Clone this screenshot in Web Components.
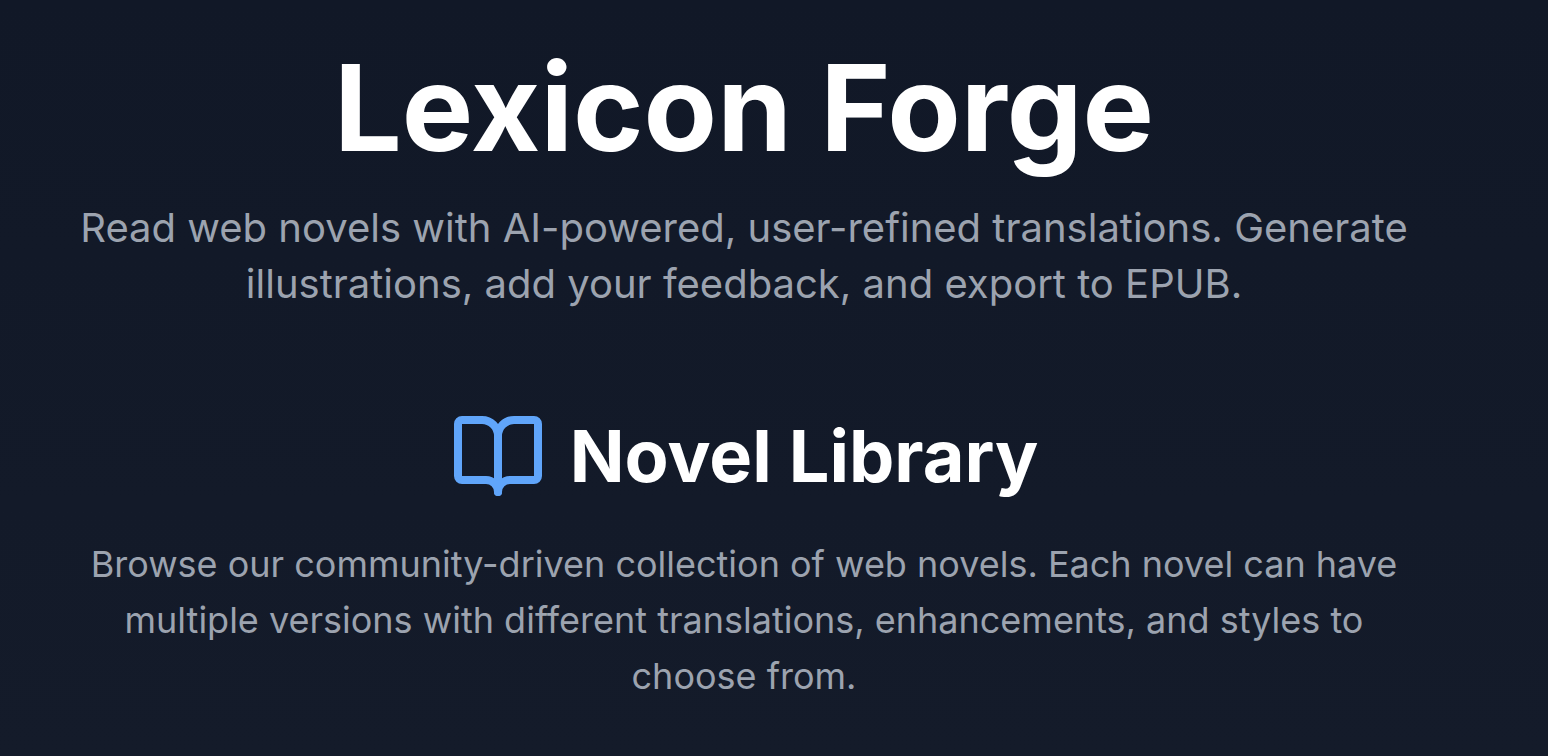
<!DOCTYPE html>
<html lang="en">
<head>
<meta charset="utf-8">
<title>Lexicon Forge</title>
<style>
html { background: linear-gradient(#111827, #141b2a); min-height: 100%; }
body { margin: 0; font-family: Inter, "Liberation Sans", sans-serif; color: #9ca3af; }
</style>
</head>
<body>
<forge-page>
  <forge-hero>
    <span slot="title">Lexicon Forge</span>
    Read web novels with AI-powered, user-refined translations. Generate illustrations, add your feedback, and export to EPUB.
  </forge-hero>
  <forge-section>
    <book-icon slot="icon"></book-icon>
    <span slot="title">Novel Library</span>
    Browse our community-driven collection of web novels. Each novel can have multiple versions with different translations, enhancements, and styles to choose from.
  </forge-section>
</forge-page>
<script>
function define(name, markup) {
  customElements.define(name, class extends HTMLElement {
    constructor() {
      super();
      this.attachShadow({ mode: "open" }).innerHTML = markup;
    }
  });
}

define("book-icon", `
  <style>
    :host { display: block; flex: none; width: 96px; height: 96px; color: #60a5fa; }
    svg { display: block; width: 100%; height: 100%; }
  </style>
  <svg viewBox="0 0 24 24" fill="none" stroke="currentColor" stroke-width="2" stroke-linecap="round" stroke-linejoin="round" aria-hidden="true">
    <path d="M12 7v14"/>
    <path d="M3 18a1 1 0 0 1-1-1V4a1 1 0 0 1 1-1h5a4 4 0 0 1 4 4 4 4 0 0 1 4-4h5a1 1 0 0 1 1 1v13a1 1 0 0 1-1 1h-6a3 3 0 0 0-3 3 3 3 0 0 0-3-3z"/>
  </svg>`);

define("forge-hero", `
  <style>
    :host { display: block; text-align: center; }
    h1 { margin: 0 0 32px; font-size: 120px; line-height: 120px; font-weight: 700; color: #fff; }
    p { margin: 0; font-size: 40px; line-height: 56px; }
  </style>
  <h1><slot name="title"></slot></h1>
  <p><slot></slot></p>`);

define("forge-section", `
  <style>
    :host { display: block; text-align: center; }
    header { display: flex; align-items: center; justify-content: center; gap: 24px; margin-bottom: 32px; }
    h2 { margin: 0; font-size: 72px; line-height: 80px; font-weight: 700; color: #fff; }
    p { margin: 0; font-size: 36px; line-height: 56px; }
  </style>
  <header><slot name="icon"></slot><h2><slot name="title"></slot></h2></header>
  <p><slot></slot></p>`);

define("forge-page", `
  <style>
    :host { display: block; padding: 48px 132px 48px 72px; }
    main { display: grid; gap: 96px; max-width: 1344px; margin: 0 auto; }
  </style>
  <main><slot></slot></main>`);
</script>
</body>
</html>
